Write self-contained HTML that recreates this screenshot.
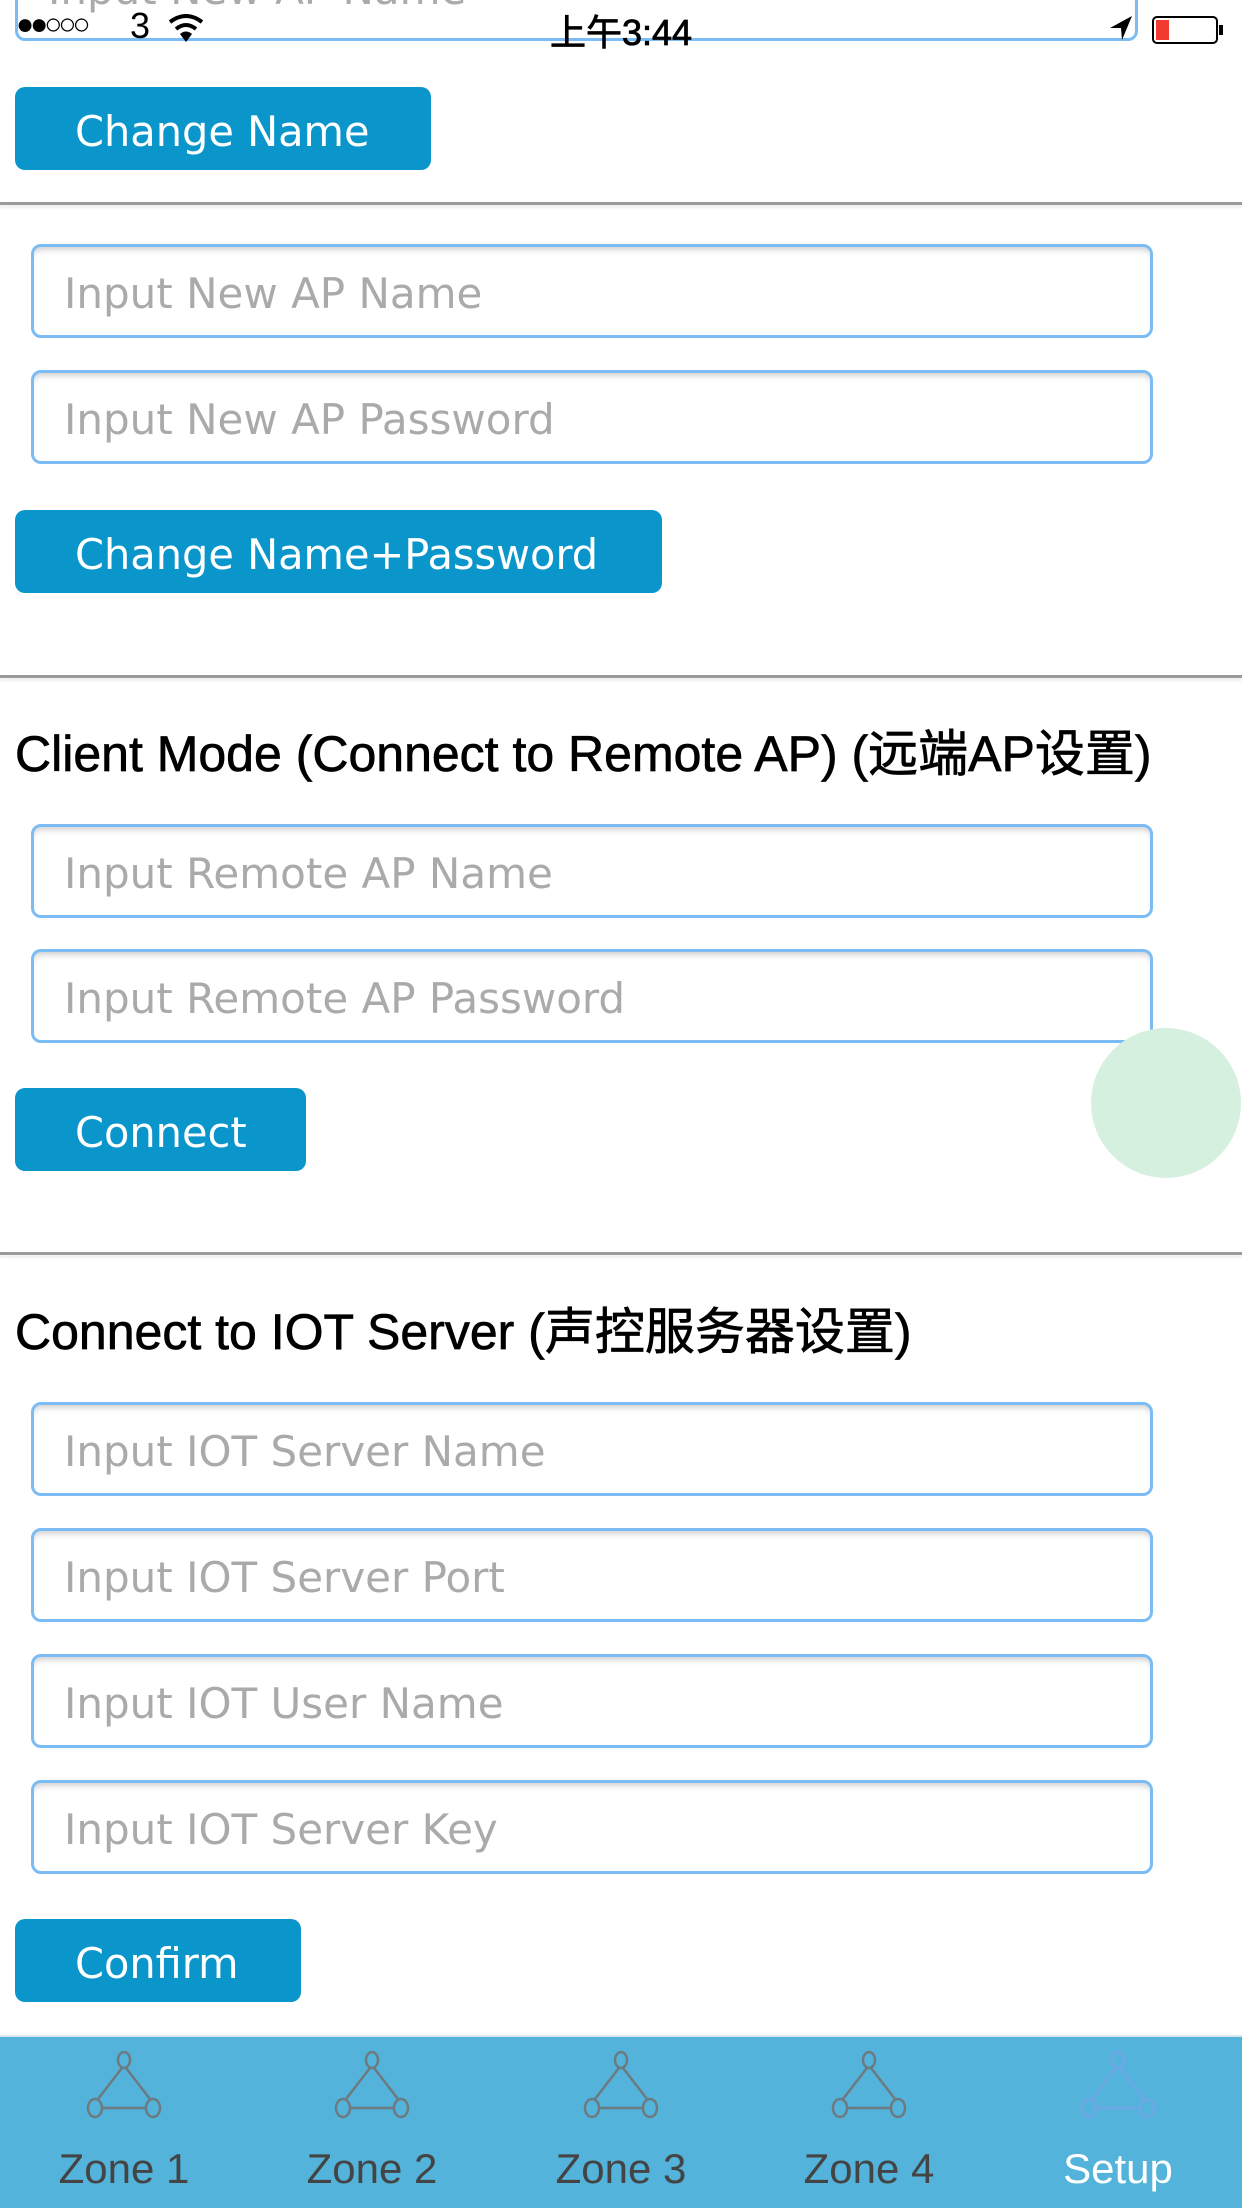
<!DOCTYPE html>
<html><head><meta charset="utf-8"><style>
*{margin:0;padding:0;box-sizing:border-box}
body{width:1242px;height:2208px;position:relative;background:#fff;overflow:hidden;font-family:"DejaVu Sans","Noto Sans CJK SC",sans-serif}
.in{position:absolute;left:31px;width:1122px;height:94px;border:3px solid #7bbcf5;border-radius:10px;box-shadow:inset 0 6px 6px -3px rgba(0,0,0,0.18);color:#aaa;font-size:42px;padding-left:30px;line-height:94px;white-space:nowrap}
.btn{position:absolute;left:15px;height:83px;background:#0a96cb;border-radius:10px;color:#fff;font-size:41.5px;line-height:89px;padding-left:60px;white-space:nowrap}
.sep{position:absolute;left:0;width:1242px;height:3px;background:#9a9a9a;box-shadow:0 3px 2px #eee}
.h{position:absolute;left:15px;font-family:"Liberation Sans","Noto Sans CJK SC",sans-serif;font-size:50px;color:#000;white-space:nowrap;line-height:60px;-webkit-text-stroke:0.7px #000}
.tab{position:absolute;left:0;top:2035px;width:1242px;height:173px;background:#53b3da;border-top:2px solid #d8e8ee}
.t{position:absolute;top:0;width:248px;text-align:center}
.t svg{position:absolute;top:14px;left:86px}
.t span{position:absolute;top:108px;left:0;width:248px;font-family:"Liberation Sans",sans-serif;font-size:42px;color:#444}
</style></head><body>
<div class="in" style="top:-53px;width:1123px;left:15px;line-height:80px">Input New AP Name</div>
<div style="position:absolute;top:0;left:0;width:1242px;height:42px;font-family:'Liberation Sans','Noto Sans CJK SC',sans-serif;font-size:36px;font-weight:bold">
 <span style="position:absolute;left:16px;top:8px;font-size:30px;letter-spacing:-4px">●●○○○</span>
 <span style="position:absolute;left:130px;top:5px;font-weight:normal">3</span>
 <svg style="position:absolute;left:168px;top:14px" width="36" height="30" viewBox="0 0 36 30"><path d="M2 8 Q18 -4 34 8" stroke="#000" stroke-width="4" fill="none"/><path d="M8 15 Q18 7 28 15" stroke="#000" stroke-width="4" fill="none"/><path d="M12 20 L18 28 L24 20 Q18 15 12 20Z" fill="#000"/></svg>
 <span style="position:absolute;left:550px;top:4px;font-weight:normal;-webkit-text-stroke:0.8px #000">上午3:44</span>
 <svg style="position:absolute;left:1108px;top:14px" width="26" height="28" viewBox="0 0 26 28"><path d="M24 2 L2 14 L13 14 L14 26 Z" fill="#000"/></svg>
 <div style="position:absolute;left:1152px;top:16px;width:66px;height:28px;border:2px solid #000;border-radius:5px;background:#fff"><div style="position:absolute;left:2px;top:2px;width:13px;height:20px;background:#f33a2f"></div></div>
 <div style="position:absolute;left:1219px;top:25px;width:4px;height:10px;background:#000"></div>
</div>
<div class="btn" style="top:87px;width:416px">Change Name</div>
<div class="sep" style="top:202px"></div>
<div class="in" style="top:244px">Input New AP Name</div>
<div class="in" style="top:370px">Input New AP Password</div>
<div class="btn" style="top:510px;width:647px">Change Name+Password</div>
<div class="sep" style="top:675px"></div>
<div class="h" style="top:724px">Client Mode (Connect to Remote AP) (远端AP设置)</div>
<div class="in" style="top:824px">Input Remote AP Name</div>
<div class="in" style="top:949px">Input Remote AP Password</div>
<div class="btn" style="top:1088px;width:291px">Connect</div>
<div style="position:absolute;left:1091px;top:1028px;width:150px;height:150px;border-radius:50%;background:#d5f0df"></div>
<div class="sep" style="top:1252px"></div>
<div class="h" style="top:1302px">Connect to IOT Server (声控服务器设置)</div>
<div class="in" style="top:1402px">Input IOT Server Name</div>
<div class="in" style="top:1528px">Input IOT Server Port</div>
<div class="in" style="top:1654px">Input IOT User Name</div>
<div class="in" style="top:1780px">Input IOT Server Key</div>
<div class="btn" style="top:1919px;width:286px">Confirm</div>
<div class="tab">
 <div class="t" style="left:0"><svg width="76" height="70" viewBox="0 0 76 70"><g stroke="#6d7a80" stroke-width="2.5" fill="none"><ellipse cx="38" cy="9" rx="6" ry="8"/><ellipse cx="9" cy="57" rx="7" ry="9"/><ellipse cx="67" cy="57" rx="7" ry="9"/><path d="M36 17 L12 48 M40 17 L64 48 M16 57 H60"/></g></svg><span>Zone 1</span></div>
 <div class="t" style="left:248px"><svg width="76" height="70" viewBox="0 0 76 70"><g stroke="#6d7a80" stroke-width="2.5" fill="none"><ellipse cx="38" cy="9" rx="6" ry="8"/><ellipse cx="9" cy="57" rx="7" ry="9"/><ellipse cx="67" cy="57" rx="7" ry="9"/><path d="M36 17 L12 48 M40 17 L64 48 M16 57 H60"/></g></svg><span>Zone 2</span></div>
 <div class="t" style="left:497px"><svg width="76" height="70" viewBox="0 0 76 70"><g stroke="#6d7a80" stroke-width="2.5" fill="none"><ellipse cx="38" cy="9" rx="6" ry="8"/><ellipse cx="9" cy="57" rx="7" ry="9"/><ellipse cx="67" cy="57" rx="7" ry="9"/><path d="M36 17 L12 48 M40 17 L64 48 M16 57 H60"/></g></svg><span>Zone 3</span></div>
 <div class="t" style="left:745px"><svg width="76" height="70" viewBox="0 0 76 70"><g stroke="#6d7a80" stroke-width="2.5" fill="none"><ellipse cx="38" cy="9" rx="6" ry="8"/><ellipse cx="9" cy="57" rx="7" ry="9"/><ellipse cx="67" cy="57" rx="7" ry="9"/><path d="M36 17 L12 48 M40 17 L64 48 M16 57 H60"/></g></svg><span>Zone 4</span></div>
 <div class="t" style="left:994px"><svg width="76" height="70" viewBox="0 0 76 70"><g stroke="#6fa6e6" stroke-width="2.5" fill="none"><ellipse cx="38" cy="9" rx="6" ry="8"/><ellipse cx="9" cy="57" rx="7" ry="9"/><ellipse cx="67" cy="57" rx="7" ry="9"/><path d="M36 17 L12 48 M40 17 L64 48 M16 57 H60"/></g></svg><span style="color:#fff">Setup</span></div>
</div>
</body></html>
